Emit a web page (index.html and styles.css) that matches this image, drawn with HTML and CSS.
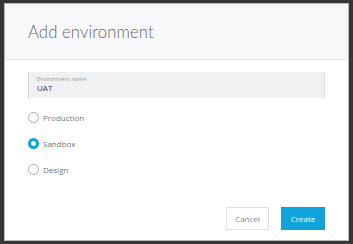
FILE: index.html
```html
<!DOCTYPE html>
<html>
<head>
<meta charset="utf-8">
<link rel="stylesheet" href="styles.css">
</head>
<body>
<div class="dialog">
  <div class="header"><h1 class="title">Add environment</h1></div>
  <div class="body">
    <div class="field">
      <div class="label">Environment name</div>
      <div class="value">UAT</div>
    </div>
    <div class="radios">
      <label class="radio"><span class="circle"></span><span class="rtext">Production</span></label>
      <label class="radio"><span class="circle checked"></span><span class="rtext">Sandbox</span></label>
      <label class="radio"><span class="circle"></span><span class="rtext">Design</span></label>
    </div>
  </div>
  <div class="footer">
    <button class="btn cancel">Cancel</button>
    <button class="btn create">Create</button>
  </div>
</div>
</body>
</html>
```
FILE: styles.css
```css
html, body { margin: 0; padding: 0; }
body {
  width: 353px;
  height: 244px;
  background: #363636;
  padding: 3px 4px 3px 4px;
  box-sizing: border-box;
  font-family: "Open Sans", "Liberation Sans", sans-serif;
}
.dialog {
  width: 345px;
  height: 238px;
  background: #fff;
  border: 1px solid #b8b8b8;
  box-sizing: border-box;
  display: flex;
  flex-direction: column;
}
.header {
  height: 56px;
  background: #f7f8fa;
  border-bottom: 1px solid #e6e6e6;
  display: flex;
  align-items: center;
  padding-left: 23px;
  box-sizing: border-box;
}
.title {
  margin: 0;
  font-family: "Lato", sans-serif;
  font-weight: 300;
  font-size: 16.7px;
  color: #666;
  letter-spacing: 0.1px;
}
.body {
  padding: 12px 23px 0 23px;
}
.field {
  height: 26px;
  background: #eef0f2;
  border-left: 1px solid #d0d2d4;
  border-right: 1px solid #dcdee0;
  box-sizing: border-box;
  padding: 4px 0 0 8px;
}
.label {
  font-size: 5.5px;
  color: #999;
  line-height: 7px;
}
.value {
  font-size: 8px;
  color: #333;
  line-height: 10px;
}
.radios {
  display: flex;
  flex-direction: column;
  gap: 15px;
  padding-top: 14px;
}
.radio {
  display: flex;
  align-items: center;
  height: 11px;
  gap: 4px;
}
.circle {
  width: 11px;
  height: 11px;
  border-radius: 50%;
  border: 1px solid #a8a8a8;
  box-sizing: border-box;
  background: #fff;
}
.circle.checked {
  border: 3px solid #0ea3dc;
}
.rtext {
  font-size: 8px;
  color: #777;
}
.footer {
  margin-top: auto;
  display: flex;
  justify-content: flex-end;
  gap: 12px;
  padding: 0 23px 10px 0;
}
.btn {
  height: 23px;
  font-family: "Open Sans", sans-serif;
  font-size: 8px;
  padding: 0;
  box-sizing: border-box;
}
.cancel {
  width: 43px;
  background: #fff;
  border: 1px solid #e0e0e0;
  color: #888;
}
.create {
  width: 44px;
  background: #0ea3dc;
  border: none;
  color: #fff;
}
```
